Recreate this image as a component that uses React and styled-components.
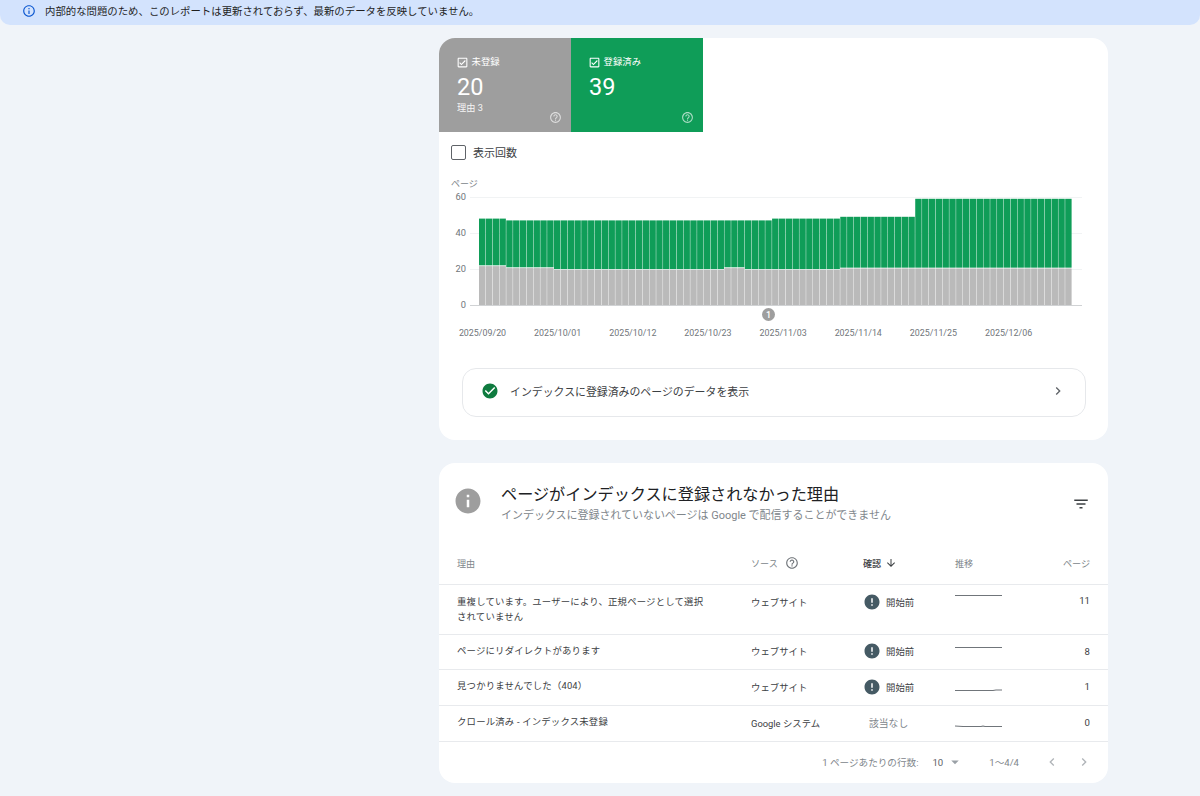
import React from "react";
import styled, { createGlobalStyle } from "styled-components";

const FONT = `Roboto, "Noto Sans CJK JP", "Noto Sans", sans-serif`;

const Global = createGlobalStyle`
  html, body { margin: 0; padding: 0; background: #f0f4f9; height: 100%; overflow: hidden; }
  body { font-family: ${FONT}; color: #1f1f1f; }
  * { box-sizing: border-box; }
`;

const PATHS = {
  infoOutline: "M11 7h2v2h-2zm0 4h2v6h-2zm1-9C6.48 2 2 6.48 2 12s4.48 10 10 10 10-4.48 10-10S17.52 2 12 2zm0 18c-4.41 0-8-3.59-8-8s3.59-8 8-8 8 3.59 8 8-3.59 8-8 8z",
  help: "M11 18h2v-2h-2v2zm1-16C6.48 2 2 6.48 2 12s4.48 10 10 10 10-4.48 10-10S17.52 2 12 2zm0 18c-4.41 0-8-3.59-8-8s3.59-8 8-8 8 3.59 8 8-3.59 8-8 8zm0-14c-2.21 0-4 1.79-4 4h2c0-1.1.9-2 2-2s2 .9 2 2c0 2-3 1.75-3 5h2c0-2.25 3-2.5 3-5 0-2.21-1.79-4-4-4z",
  checkBox: "M19 3H5c-1.1 0-2 .9-2 2v14c0 1.1.9 2 2 2h14c1.1 0 2-.9 2-2V5c0-1.1-.9-2-2-2zm0 16H5V5h14v14zM17.99 9l-1.41-1.42-6.59 6.59-2.58-2.57-1.42 1.41 4 3.99z",
  checkCircle: "M12 2C6.48 2 2 6.48 2 12s4.48 10 10 10 10-4.48 10-10S17.52 2 12 2zm-2 15l-5-5 1.41-1.41L10 14.17l7.59-7.59L19 8l-9 9z",
  filter: "M10 18h4v-2h-4v2zM3 6v2h18V6H3zm3 7h12v-2H6v2z",
  arrowDown: "M20 12l-1.41-1.41L13 16.17V4h-2v12.17l-5.58-5.59L4 12l8 8 8-8z",
  right: "M10 6L8.59 7.41 13.17 12l-4.58 4.59L10 18l6-6z",
  left: "M15.41 7.41L14 6l-6 6 6 6 1.41-1.41L10.83 12z",
  info: "M12 2C6.48 2 2 6.48 2 12s4.48 10 10 10 10-4.48 10-10S17.52 2 12 2zm1 15h-2v-6h2v6zm0-8h-2V7h2v2z",
  error: "M12 2C6.48 2 2 6.48 2 12s4.48 10 10 10 10-4.48 10-10S17.52 2 12 2zm1 15h-2v-2h2v2zm0-4h-2V7h2v6z",
  drop: "M7 10l5 5 5-5z",
};

const Svg = styled.svg`
  display: block;
  flex: none;
`;
const Icon = ({ name, size = 16, color = "currentColor" }) => (
  <Svg width={size} height={size} viewBox="0 0 24 24" fill={color}>
    <path d={PATHS[name]} />
  </Svg>
);

const Page = styled.div`
  width: 1200px;
  height: 796px;
  overflow: hidden;
`;
const Banner = styled.div`
  height: 25px;
  background: #d3e3fd;
  border-radius: 0 0 10px 10px;
  display: flex;
  align-items: center;
  gap: 9px;
  padding: 0 0 4px 22px;
  font-size: 10.4px;
  color: #1f1f1f;
`;
const Main = styled.main`
  width: 669px;
  margin: 13px 0 0 439px;
  display: flex;
  flex-direction: column;
  gap: 23px;
`;
const Card = styled.section`
  background: #fff;
  border-radius: 16px;
  overflow: hidden;
`;
const Tiles = styled.div`
  display: flex;
`;
const Tile = styled.div`
  position: relative;
  width: 132px;
  height: 94px;
  padding: 17px 18px 0;
  background: ${(p) => p.$bg};
  color: #fff;
`;
const TileLabel = styled.div`
  display: flex;
  align-items: center;
  gap: 3px;
  font-size: 9.4px;
  line-height: 14px;
  margin-left: -1.5px;
`;
const TileValue = styled.div`
  font-size: 23.5px;
  line-height: 28px;
  margin-top: 4px;
`;
const TileSub = styled.div`
  font-size: 9.2px;
  line-height: 12px;
  margin-top: 1px;
  opacity: 0.9;
`;
const TileHelp = styled.div`
  position: absolute;
  right: 9px;
  bottom: 8px;
  opacity: 0.65;
`;
const MetricRow = styled.label`
  height: 40px;
  display: flex;
  align-items: center;
  gap: 7px;
  padding-left: 12px;
  font-size: 11px;
  color: #3c4043;
`;
const Box = styled.span`
  width: 15px;
  height: 15px;
  border: 1.6px solid #5f6368;
  border-radius: 2px;
`;
const Chart = styled.svg`
  display: block;
  font-family: ${FONT};
`;
const LinkCard = styled.div`
  height: 49px;
  margin: 0 22px 23px 23px;
  border: 1px solid #e6e8eb;
  border-radius: 14px;
  display: flex;
  align-items: center;
  padding: 0 19px 3px 18px;
  font-size: 10.9px;
  color: #3c4043;
`;
const LinkText = styled.span`
  flex: 1;
  margin-left: 11px;
`;
const CardHead = styled.header`
  height: 82px;
  display: flex;
  align-items: center;
  padding: 0 18px 6px 14px;
`;
const HeadText = styled.div`
  flex: 1;
  margin-left: 18px;
  margin-top: 4px;
`;
const Title = styled.h2`
  margin: 0;
  font-size: 16.15px;
  line-height: 23px;
  font-weight: 400;
  color: #202124;
`;
const Sub = styled.p`
  margin: 0 0 -1px;
  font-size: 10.97px;
  line-height: 19px;
  color: #80868b;
`;
const FilterSlot = styled.div`
  margin-top: 5px;
`;
const Row = styled.div`
  display: grid;
  grid-template-columns: 294px 112px 92px 85px 50px;
  padding: 0 18px ${(p) => (p.$head ? 4 : 2)}px;
  align-items: center;
  height: ${(p) => p.$h}px;
  border-bottom: 1px solid #e8eaed;
  font-size: ${(p) => (p.$head ? 9.1 : 9.4)}px;
  color: ${(p) => (p.$head ? "#80868b" : "#3c4043")};
`;
const Cell = styled.div`
  ${(p) => (p.$top !== undefined ? `align-self: start; margin-top: ${p.$top}px;` : "")}
`;
const Reason = styled(Cell)`
  max-width: 250px;
  line-height: 14.5px;
  letter-spacing: 0.02em;
  color: #3c4043;
`;
const ColHead = styled.div`
  display: flex;
  align-items: center;
  gap: ${(p) => p.$gap || 0}px;
  font-weight: ${(p) => (p.$bold ? 500 : 400)};
  color: ${(p) => (p.$bold ? "#3c4043" : "#80868b")};
  justify-content: ${(p) => (p.$end ? "flex-end" : "flex-start")};
`;
const Status = styled(Cell)`
  display: flex;
  align-items: center;
  gap: 5px;
  color: #3c4043;
`;
const NA = styled.div`
  margin-left: 6px;
  color: #80868b;
  font-size: 9.8px;
`;
const Num = styled(Cell)`
  text-align: right;
  font-size: 9.6px;
  color: #3c4043;
`;
const Footer = styled.footer`
  height: 41px;
  display: flex;
  align-items: center;
  justify-content: flex-end;
  padding: 0 16px 1px 0;
  font-size: 9.6px;
  color: #80868b;
`;
const PerPage = styled.span`
  margin-right: 14px;
`;
const PageSize = styled.span`
  color: #5f6368;
  margin-right: 3px;
`;
const Range = styled.span`
  margin: 0 25px 0 25px;
`;
const Pager = styled.div`
  display: flex;
  gap: 16px;
`;

const bars = Array.from({ length: 87 }, (_, i) => {
  const total = i < 4 ? 48 : i < 43 ? 47 : i < 53 ? 48 : i < 64 ? 49 : 59;
  const gray = i < 4 ? 21.6 : i < 11 ? 20.5 : i < 36 ? 19.5 : i < 39 ? 20.5 : i < 53 ? 19.5 : 20.3;
  return { total, gray };
});
const dates = ["2025/09/20", "2025/10/01", "2025/10/12", "2025/10/23", "2025/11/03", "2025/11/14", "2025/11/25", "2025/12/06"];
const OFF = 439;
const TOP = 172;
const y0 = 305 - TOP;
const S = 1.8;
const step = 593 / 87;

const IndexChart = () => (
  <Chart width="669" height="196" viewBox="0 0 669 196">
    <text x={451 - OFF} y={187 - TOP} fontSize="9" fill="#80868b">ページ</text>
    {[60, 40, 20].map((v) => (
      <line key={v} x1={470 - OFF} x2={1082 - OFF} y1={y0 - v * S + 0.5} y2={y0 - v * S + 0.5} stroke="#f1f3f4" />
    ))}
    <line x1={470 - OFF} x2={1082 - OFF} y1={y0 + 0.5} y2={y0 + 0.5} stroke="#d0d2d4" />
    {[60, 40, 20, 0].map((v) => (
      <text key={v} x={466 - OFF} y={y0 - v * S + 3} fontSize="9.3" fill="#70757a" textAnchor="end">{v}</text>
    ))}
    {bars.map((b, i) => {
      const x = 479 - OFF + i * step;
      const gh = b.gray * S;
      const th = b.total * S;
      return (
        <g key={i}>
          <rect x={x} y={y0 - gh} width={step - 0.4} height={gh} fill="#bababa" />
          <rect x={x} y={y0 - th} width={step - 0.4} height={th - gh - 0.8} fill="#0f9d58" />
        </g>
      );
    })}
    <circle cx={768.5 - OFF} cy={314.5 - TOP} r="6.5" fill="#9e9e9e" />
    <text x={768.5 - OFF} y={317.8 - TOP} fontSize="9" fontWeight="500" fill="#fff" textAnchor="middle">1</text>
    {dates.map((d, i) => (
      <text key={d} x={482.5 - OFF + i * 75.15} y={336 - TOP} fontSize="8.9" fill="#70757a" textAnchor="middle">{d}</text>
    ))}
  </Chart>
);

const SparkBox = styled(Cell)`
  height: 14px;
`;
const Spark = ({ d, top }) => (
  <SparkBox $top={top}>
    <Svg width="47" height="14" viewBox="0 0 47 14" fill="none">
      <path d={d} stroke="#70757a" strokeWidth="1.2" />
    </Svg>
  </SparkBox>
);

const Needs = ({ top }) => (
  <Status $top={top}>
    <Icon name="error" size={18} color="#455a64" />
    <span>開始前</span>
  </Status>
);

const rows = [
  { h: 50, reason: "重複しています。ユーザーにより、正規ページとして選択されていません", src: "ウェブサイト", spark: "M0 3.5H47", n: 11, first: true },
  { h: 35, reason: "ページにリダイレクトがあります", src: "ウェブサイト", spark: "M0 3.5H47", n: 8 },
  { h: 36, reason: "見つかりませんでした（404）", src: "ウェブサイト", spark: "M0 10.5H38L41 10H47", n: 1 },
  { h: 36, reason: "クロール済み - インデックス未登録", src: "Google システム", spark: "M0 10L8 10.5H26L28 10L30 10.5H47", n: 0, na: true },
];

export default function App() {
  return (
    <Page>
      <Global />
      <Banner>
        <Icon name="infoOutline" size={14} color="#0b57d0" />
        <span>内部的な問題のため、このレポートは更新されておらず、最新のデータを反映していません。</span>
      </Banner>
      <Main>
        <Card>
          <Tiles>
            <Tile $bg="#9e9e9e">
              <TileLabel><Icon name="checkBox" size={13} color="#fff" />未登録</TileLabel>
              <TileValue>20</TileValue>
              <TileSub>理由 3</TileSub>
              <TileHelp><Icon name="help" size={13} color="#fff" /></TileHelp>
            </Tile>
            <Tile $bg="#0f9d58">
              <TileLabel><Icon name="checkBox" size={13} color="#fff" />登録済み</TileLabel>
              <TileValue>39</TileValue>
              <TileHelp><Icon name="help" size={13} color="#fff" /></TileHelp>
            </Tile>
          </Tiles>
          <MetricRow><Box />表示回数</MetricRow>
          <IndexChart />
          <LinkCard>
            <Icon name="checkCircle" size={18} color="#0f7b3f" />
            <LinkText>インデックスに登録済みのページのデータを表示</LinkText>
            <Icon name="right" size={16} color="#5f6368" />
          </LinkCard>
        </Card>
        <Card>
          <CardHead>
            <Icon name="info" size={30} color="#9e9e9e" />
            <HeadText>
              <Title>ページがインデックスに登録されなかった理由</Title>
              <Sub>インデックスに登録されていないページは Google で配信することができません</Sub>
            </HeadText>
            <FilterSlot><Icon name="filter" size={18} color="#3c4043" /></FilterSlot>
          </CardHead>
          <Row $h={40} $head>
            <ColHead>理由</ColHead>
            <ColHead $gap={7}>ソース<Icon name="help" size={14} color="#70757a" /></ColHead>
            <ColHead $bold $gap={4}>確認<Icon name="arrowDown" size={12} color="#3c4043" /></ColHead>
            <ColHead>推移</ColHead>
            <ColHead $end>ページ</ColHead>
          </Row>
          {rows.map((r) => (
            <Row key={r.reason} $h={r.h}>
              <Reason $top={r.first ? 10 : undefined}>{r.reason}</Reason>
              <Cell $top={r.first ? 10 : undefined}>{r.src}</Cell>
              {r.na ? <NA>該当なし</NA> : <Needs top={r.first ? 8 : undefined} />}
              <Spark d={r.spark} top={r.first ? 6.5 : undefined} />
              <Num $top={r.first ? 10 : undefined}>{r.n}</Num>
            </Row>
          ))}
          <Footer>
            <PerPage>1 ページあたりの行数:</PerPage>
            <PageSize>10</PageSize>
            <Icon name="drop" size={18} color="#9aa0a6" />
            <Range>1〜4/4</Range>
            <Pager>
              <Icon name="left" size={16} color="#b0b4b8" />
              <Icon name="right" size={16} color="#b0b4b8" />
            </Pager>
          </Footer>
        </Card>
      </Main>
    </Page>
  );
}
